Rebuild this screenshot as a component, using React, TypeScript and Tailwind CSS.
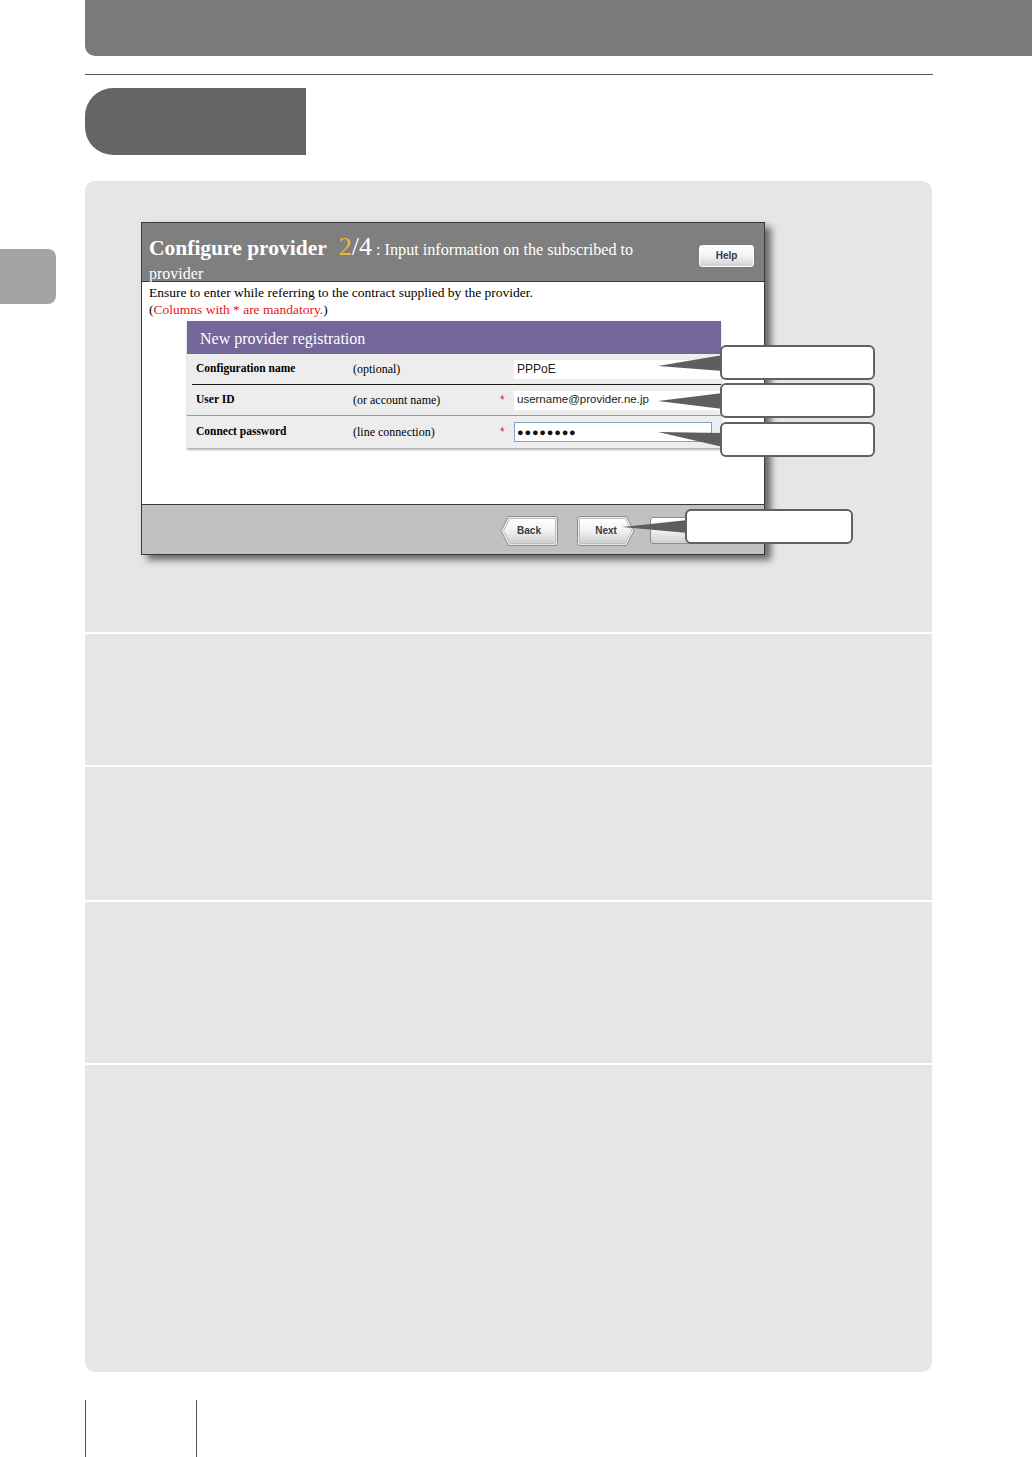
import React from "react";

const serif = "font-['Liberation_Serif','Times_New_Roman',serif]";
const sans = "font-['Liberation_Sans',Arial,sans-serif]";

function ArrowButton({ label, dir }: { label: string; dir: "left" | "right" }) {
  const outer =
    dir === "left"
      ? "M8.5,0.5 H55 Q57.5,0.5 57.5,3 V27 Q57.5,29.5 55,29.5 H8.5 L1,15 Z"
      : "M49.5,0.5 H3 Q0.5,0.5 0.5,3 V27 Q0.5,29.5 3,29.5 H49.5 L57,15 Z";
  const inner =
    dir === "left"
      ? "M10,2.5 H54 Q55.5,2.5 55.5,4 V26 Q55.5,27.5 54,27.5 H10 L3.5,15 Z"
      : "M48,2.5 H4 Q2.5,2.5 2.5,4 V26 Q2.5,27.5 4,27.5 H48 L54.5,15 Z";
  const gid = `btn-grad-${dir}`;
  return (
    <div className="relative w-[58px] h-[30px] flex items-center justify-center">
      <svg className="absolute inset-0" width="58" height="30" viewBox="0 0 58 30">
        <defs>
          <linearGradient id={gid} x1="0" y1="0" x2="0" y2="1">
            <stop offset="0" stopColor="#ffffff" />
            <stop offset="0.45" stopColor="#f4f4f4" />
            <stop offset="1" stopColor="#cfcfcf" />
          </linearGradient>
        </defs>
        <path d={outer} fill="#e9e9e9" stroke="#8e8e8e" strokeWidth="1" />
        <path d={inner} fill={`url(#${gid})`} stroke="#b5b5b5" strokeWidth="0.8" />
      </svg>
      <span className={`relative ${sans} text-[10px] font-bold text-[#3a3a3a] leading-none`}>
        {label}
      </span>
    </div>
  );
}

function Callout({ className }: { className: string }) {
  return (
    <div
      className={`absolute border-2 border-[#616161] rounded-[6px] bg-white ${className}`}
    />
  );
}

export default function App() {
  return (
    <div className="w-[1032px] h-[1457px] bg-white overflow-hidden">
      {/* top header bar */}
      <div className="ml-[85px] h-[56px] bg-[#7b7a7b] rounded-bl-[10px]" />
      {/* rule */}
      <div className="ml-[85px] mr-[99px] mt-[18px] h-[1px] bg-[#555555]" />
      {/* dark tab */}
      <div className="ml-[85px] mt-[13px] w-[221px] h-[67px] bg-[#666566] rounded-l-[28px]" />

      {/* panel row */}
      <div className="mt-[26px] flex">
        <div className="w-[85px] shrink-0">
          <div className="mt-[68px] w-[56px] h-[55px] bg-[#a5a3a4] rounded-r-[8px]" />
        </div>
        <div className="w-[847px] rounded-[10px] overflow-hidden bg-white flex flex-col gap-[2px]">
          {/* section 1 with screenshot */}
          <div className="relative h-[451px] bg-[#e6e6e6] pt-[41px] pl-[56px]">
            <div className="w-[624px] h-[333px] border border-[#3a3a3a] bg-white flex flex-col shadow-[6px_5px_7px_rgba(0,0,0,0.55)]">
              {/* title bar */}
              <div className="h-[59px] shrink-0 bg-[#7f7f7f] border-b border-[#3a3a3a] flex justify-between pl-[7px] pr-[9px]">
                <div className={`${serif} text-white pt-[9px]`}>
                  <div className="leading-[30px] whitespace-nowrap">
                    <span className="text-[21.5px] font-bold">Configure provider</span>
                    <span className="text-[26px] text-[#f2b731] ml-[12px]">2</span>
                    <span className="text-[26px]">/4</span>
                    <span className="text-[16.2px] ml-[4px]">: Input information on the subscribed to</span>
                  </div>
                  <div className="text-[16px] leading-[17px]">provider</div>
                </div>
                <div className="mt-[21px] w-[57px] h-[24px] rounded-[4px] border border-[#7a7a7a] bg-gradient-to-b from-[#ffffff] via-[#f2f2f2] to-[#cfcfcf] shadow-[inset_0_0_0_1px_#ffffff] flex items-center justify-center">
                  <span className={`${sans} text-[10px] font-bold text-[#333a4a] leading-none`}>Help</span>
                </div>
              </div>

              {/* body */}
              <div className={`h-[222px] shrink-0 bg-white pt-[2px] pl-[7px] ${serif} text-black`}>
                <div className="text-[13.5px] leading-[17px] whitespace-nowrap">
                  Ensure to enter while referring to the contract supplied by the provider.
                </div>
                <div className="text-[13.5px] leading-[17px] whitespace-nowrap">
                  (<span className="text-[#e8121a]">Columns with * are mandatory.</span>)
                </div>

                {/* form box */}
                <div className="ml-[38px] mt-[3px] w-[534px] bg-[#ededed] shadow-[0_2px_2px_rgba(0,0,0,0.3)]">
                  <div className="h-[33px] bg-[#73669b] flex items-center pl-[13px] pt-[2px]">
                    <span className="text-white text-[16px] leading-none">New provider registration</span>
                  </div>
                  {/* row 1 */}
                  <div className="h-[30px] flex items-center">
                    <div className="w-[166px] pl-[9px] text-[11.5px] font-bold">Configuration name</div>
                    <div className="w-[147px] text-[12px]">(optional)</div>
                    <div className="w-[14px]" />
                    <div className="flex-1 h-[19px] bg-white flex items-center pl-[3px]">
                      <span className={`${sans} text-[12px] text-[#222]`}>PPPoE</span>
                    </div>
                  </div>
                  <div className="ml-[5px] h-[1px] bg-[#1a1a1a]" />
                  {/* row 2 */}
                  <div className="h-[30px] flex items-center">
                    <div className="w-[166px] pl-[9px] text-[11.5px] font-bold">User ID</div>
                    <div className="w-[147px] text-[12px]">(or account name)</div>
                    <div className={`w-[14px] text-[12px] text-[#e8121a] ${sans}`}>*</div>
                    <div className="flex-1 h-[19px] bg-white flex items-center pl-[3px]">
                      <span className={`${sans} text-[11.5px] text-[#222]`}>username@provider.ne.jp</span>
                    </div>
                  </div>
                  <div className="h-[1px] bg-[#9a9a9a]" />
                  {/* row 3 */}
                  <div className="h-[32px] flex items-center">
                    <div className="w-[166px] pl-[9px] text-[11.5px] font-bold">Connect password</div>
                    <div className="w-[147px] text-[12px]">(line connection)</div>
                    <div className={`w-[14px] text-[12px] text-[#e8121a] ${sans}`}>*</div>
                    <div className="w-[198px] h-[20px] bg-white border border-[#7ea4c8] flex items-center pl-[2px]">
                      <span className={`${sans} text-[11px] tracking-[0.8px] text-[#111] leading-none`}>●●●●●●●●</span>
                    </div>
                  </div>
                </div>
              </div>

              {/* footer */}
              <div className="h-[50px] shrink-0 bg-[#c1c1c1] border-t border-[#3a3a3a] flex justify-end items-start pt-[11px] pr-[54px]">
                <ArrowButton label="Back" dir="left" />
                <div className="ml-[19px]">
                  <ArrowButton label="Next" dir="right" />
                </div>
                <div className="ml-[15px] mt-[1px] w-[60px] h-[27px] rounded-[3px] border border-[#8e8e8e] bg-gradient-to-b from-[#ffffff] via-[#f2f2f2] to-[#cfcfcf]" />
              </div>
            </div>

            {/* callout pointers */}
            <svg className="absolute left-0 top-0 pointer-events-none" width="847" height="451" viewBox="0 0 847 451">
              <polygon points="573,185 638,174 638,190" fill="#5e5e5e" />
              <polygon points="573,220 638,212 638,228" fill="#5e5e5e" />
              <polygon points="573,251 638,252 638,266" fill="#5e5e5e" />
              <polygon points="537,346 603,339 603,352" fill="#5e5e5e" />
            </svg>
            <Callout className="left-[635px] top-[164px] w-[155px] h-[35px]" />
            <Callout className="left-[635px] top-[202px] w-[155px] h-[35px]" />
            <Callout className="left-[635px] top-[241px] w-[155px] h-[35px]" />
            <Callout className="left-[600px] top-[328px] w-[168px] h-[35px]" />
          </div>
          <div className="h-[131px] bg-[#e6e6e6]" />
          <div className="h-[133px] bg-[#e6e6e6]" />
          <div className="h-[161px] bg-[#e6e6e6]" />
          <div className="h-[307px] bg-[#e6e6e6]" />
        </div>
      </div>

      {/* bottom page marks */}
      <div className="mt-[28px] ml-[85px] flex">
        <div className="w-[1px] h-[57px] bg-[#555555]" />
        <div className="ml-[110px] w-[1px] h-[57px] bg-[#555555]" />
      </div>
    </div>
  );
}
